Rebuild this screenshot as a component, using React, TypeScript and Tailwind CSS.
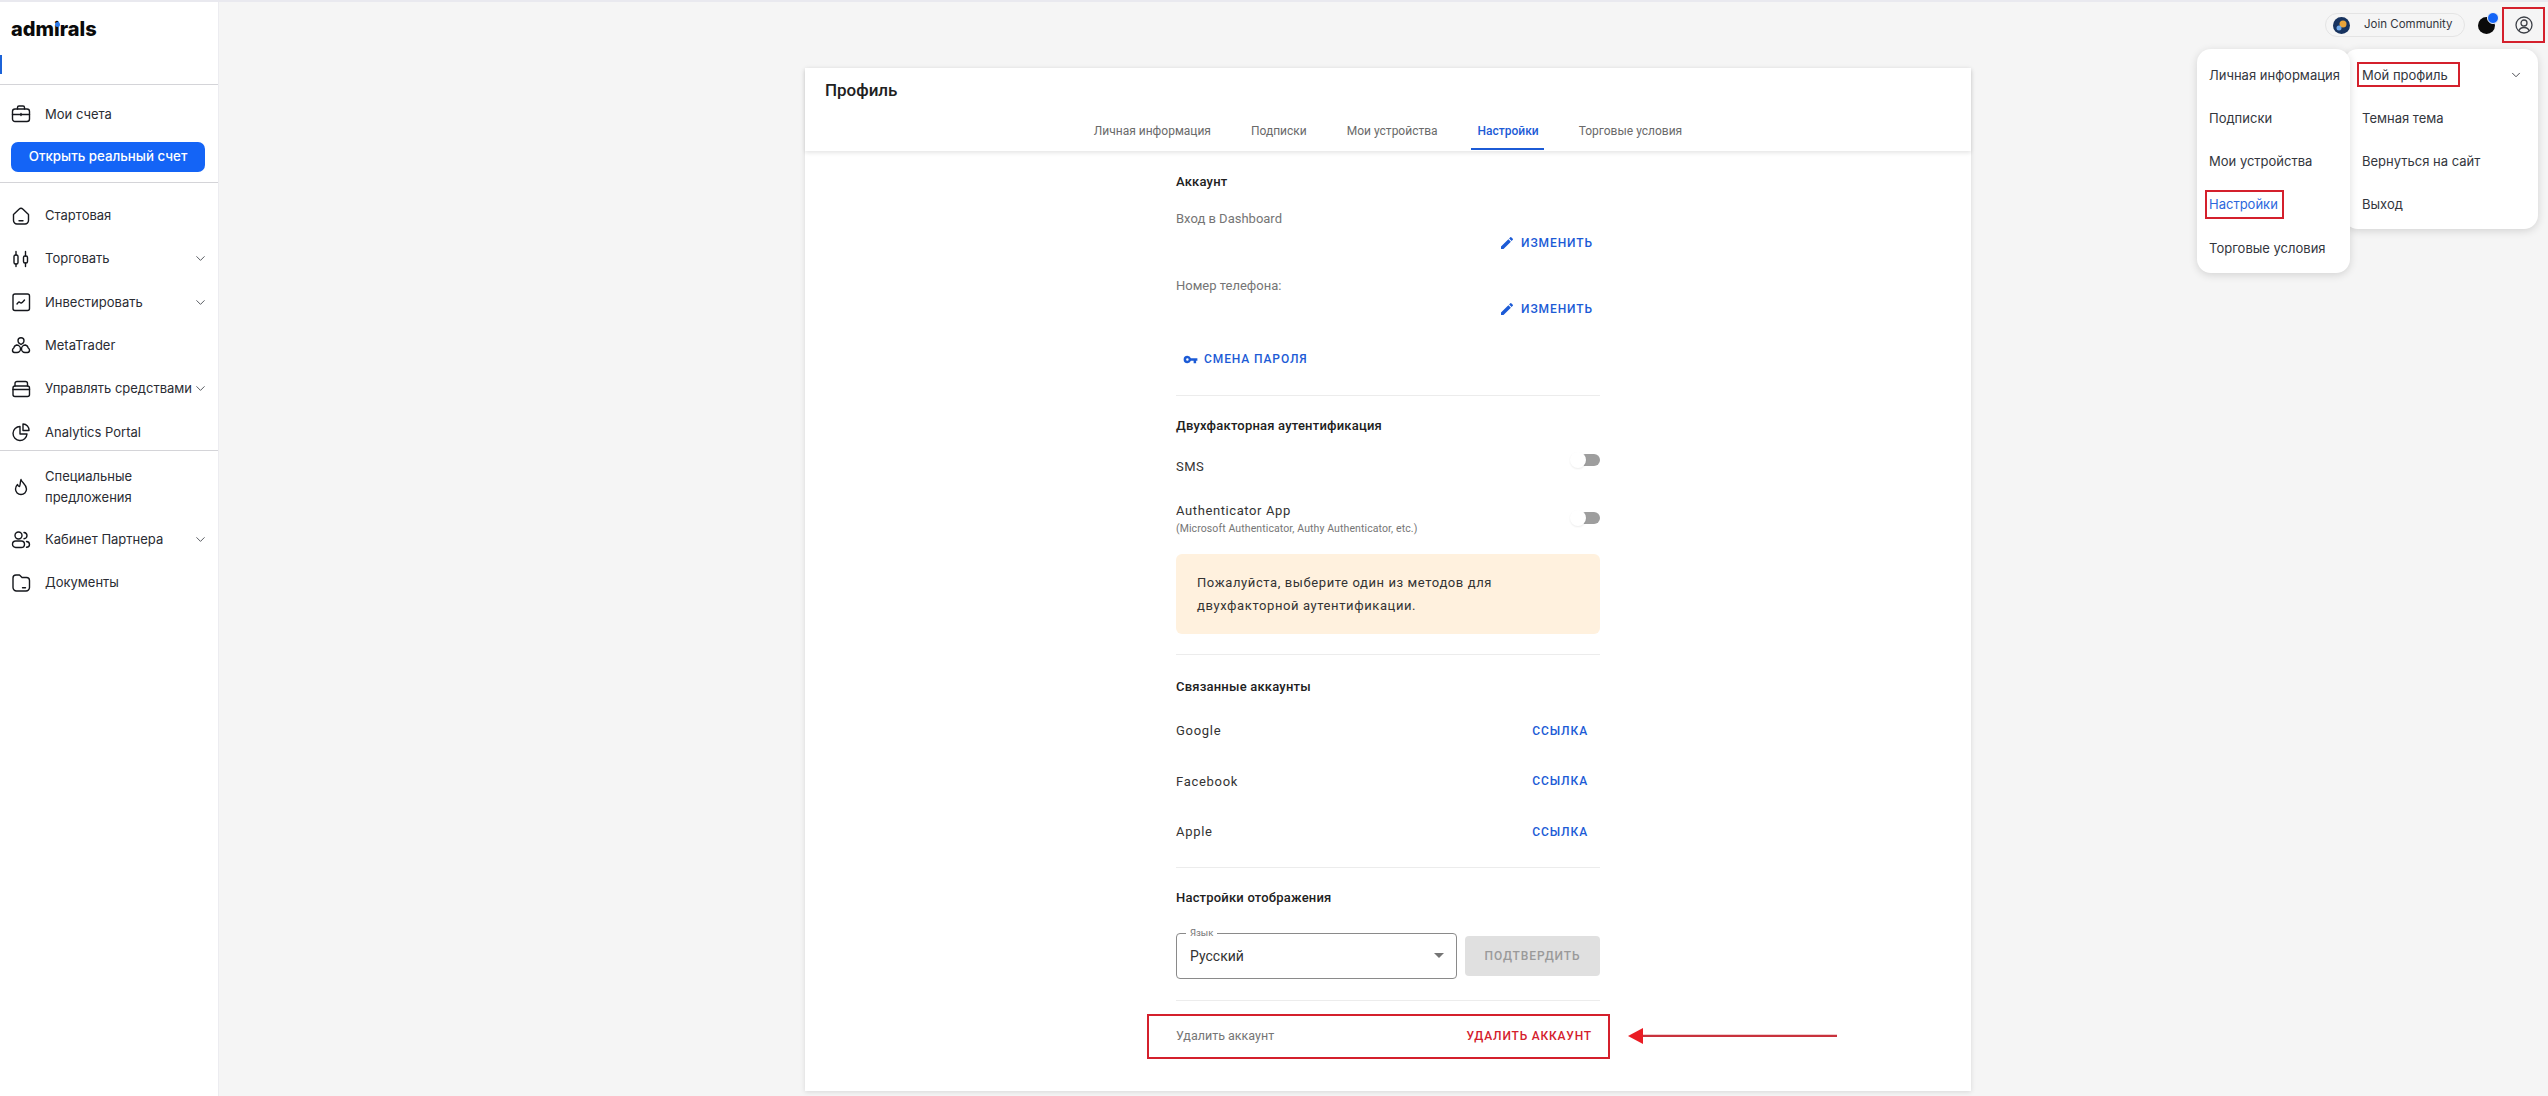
import { ReactNode } from "react"
import { ChevronDown } from "lucide-react"

const sw = { fill: "none", stroke: "currentColor", strokeWidth: 1.4, strokeLinecap: "round" as const, strokeLinejoin: "round" as const }

const Ic = ({ children }: { children: ReactNode }) => (
    <svg width="20" height="20" viewBox="0 0 20 20" className="shrink-0 text-[#15171c]" {...sw}>{children}</svg>
)

const icons: Record<string, ReactNode> = {
    accounts: <Ic><rect x="1.5" y="5" width="17" height="12.5" rx="2.5" /><path d="M6.5 5V3.5a1.5 1.5 0 0 1 1.5-1.5h4a1.5 1.5 0 0 1 1.5 1.5V5M1.5 10.5h17M10 9.5v2" /></Ic>,
    home: <Ic><path d="M2.5 8.5 8 3.2a3 3 0 0 1 4 0l5.500 5.300v6a3.500 3.500 0 0 1-3.500 3.500H6a3.500 3.500 0 0 1-3.500-3.500z" /><path d="M8 14.800h4" /></Ic>,
    trade: <Ic><rect x="3" y="6" width="4" height="9" rx="1.500" /><rect x="12.500" y="7" width="4" height="7" rx="1.500" /><path d="M5 2.500V6M5 15v2.500M14.500 2.500V7M14.500 14v3.500" /></Ic>,
    invest: <Ic><rect x="2" y="2" width="16.500" height="16.500" rx="2" /><path d="M6 12c1.500-2 2-2.500 3-1.500s1.500 1 4.500-2.500" /></Ic>,
    meta: <Ic><path d="M10 1.800a3 3 0 0 1 3 3c0 1-.5 1.800-1 2.400l-2 1.300-2-1.300c-.5-.6-1-1.400-1-2.400a3 3 0 0 1 3-3z" /><path d="M5.500 9a4 4 0 0 1 4 4 3.500 3.500 0 0 1-3.500 3.500H3.500A2.300 2.300 0 0 1 1.500 14c0-1 .7-1.600 1.200-2A4 4 0 0 1 5.500 9z" /><path d="M14.500 9a4 4 0 0 0-4 4 3.500 3.500 0 0 0 3.500 3.500h2.500a2.300 2.300 0 0 0 2-2.500c0-1-.7-1.600-1.200-2A4 4 0 0 0 14.500 9z" /></Ic>,
    funds: <Ic><rect x="2" y="7" width="16.500" height="10.500" rx="2" /><path d="M4 7V4.500A2 2 0 0 1 6 2.500h8.500a2 2 0 0 1 2 2V7M2 10.500h16.500" /></Ic>,
    pie: <Ic><path d="M9 4.500A7 7 0 1 0 16 12H9z" /><path d="M12 2a6 6 0 0 1 6 6.500h-6z" /></Ic>,
    flame: <Ic><path d="M10 2.500c.5 3 5.500 5 5.500 9.500a5.500 5.500 0 0 1-11 0c0-2 1-3.500 2-4.500.5 1.500 1.200 2 2 2C9.500 8 9 5 10 2.500z" /></Ic>,
    partner: <Ic><circle cx="7.500" cy="5.500" r="3.500" /><path d="M13 2.500a3.300 3.300 0 0 1 3 3.200 3.300 3.300 0 0 1-3 3" /><rect x="1.500" y="11" width="12" height="6.500" rx="3.250" /><path d="M15.500 11.500c2 .2 3 1.500 3 3s-1 2.600-3 2.800" /></Ic>,
    docs: <Ic><path d="M2 5a3 3 0 0 1 3-3h3.500L11 4.500h4.500a3 3 0 0 1 3 3v7a3.500 3.500 0 0 1-3.500 3.500H5.500A3.500 3.500 0 0 1 2 14.500z" /><path d="M11.500 14.800h3" /></Ic>,
}

const NavItem = ({ icon, label, arrow, className }: { icon: string, label: ReactNode, arrow?: boolean, className?: string }) => (
    <div className={`flex items-center pl-[11px] pr-[10px] text-[13px] text-[#2a2c33] ${className ?? "h-[43.300px]"}`}>
        <div className="w-[34px] shrink-0">{icons[icon]}</div>
        <div className="flex-1 leading-[21px] whitespace-nowrap">{label}</div>
        {arrow && <ChevronDown size={15} strokeWidth={1.300} className="shrink-0 text-[#33363d]" />}
    </div>
)

const Sidebar = () => (
    <aside className="w-[219px] shrink-0 bg-white border-r border-[#ececf0] font-['Inter',sans-serif] h-[1094px]">
        <div className="h-[82px] relative">
            <div className="pl-[11px] pt-[13px] text-[20px] font-extrabold leading-[29px] text-[#0a0a0a]">
                adm<span className="relative">i<span className="absolute left-[1px] top-[5px] w-[4.500px] h-[4.500px] rounded-full bg-[#2f7bea]" /></span>rals
            </div>
            <div className="absolute left-0 top-[53px] w-[2px] h-[19px] bg-[#1c63d8]" />
        </div>
        <div className="border-t border-[#d4d4d8] h-[98px] flex flex-col">
            <NavItem icon="accounts" label="Мои счета" className="h-[57px] pt-[1px]" />
            <button className="ml-[11px] mr-[13px] h-[30px] bg-[#1464f6] text-white rounded-[7px] text-[13.300px] font-medium">Открыть реальный счет</button>
        </div>
        <div className="border-t border-[#d4d4d8] pt-[11px] h-[268px]">
            <NavItem icon="home" label="Стартовая" />
            <NavItem icon="trade" label="Торговать" arrow />
            <NavItem icon="invest" label="Инвестировать" arrow />
            <NavItem icon="meta" label="MetaTrader" />
            <NavItem icon="funds" label="Управлять средствами" arrow />
            <NavItem icon="pie" label="Analytics Portal" />
        </div>
        <div className="border-t border-[#d4d4d8] pt-[2px]">
            <NavItem icon="flame" label={<>Специальные<br />предложения</>} className="h-[66px] pt-[1px]" />
            <NavItem icon="partner" label="Кабинет Партнера" arrow className="h-[43px] -mt-[1px]" />
            <NavItem icon="docs" label="Документы" className="h-[43px]" />
        </div>
    </aside>
)

const tabs = ["Личная информация", "Подписки", "Мои устройства", "Настройки", "Торговые условия"]

const Tabs = () => (
    <div className="flex justify-center gap-[40px] h-[40px]">
        {tabs.map(t => (
            <div key={t} className="relative h-full pt-[12px] text-[12px] leading-[16px] text-[#6a6a6a]">
                <span className={t === "Настройки" ? "text-[#1c5bd6] font-medium" : ""}>{t}</span>
                {t === "Настройки" && <div className="absolute -left-[7px] -right-[5px] bottom-[1px] h-[2px] bg-[#1c5bd6]" />}
            </div>
        ))}
    </div>
)

const Heading = ({ children, className }: { children: ReactNode, className?: string }) => (
    <div className={`text-[13px] font-medium leading-[16px] tracking-[0.2px] text-[#212121] ${className ?? ""}`}>{children}</div>
)

const Pencil = () => (
    <svg width="16" height="16" viewBox="0 0 24 24" fill="currentColor"><path d="M3 17.250V21h3.750L17.810 9.940l-3.750-3.750L3 17.250zM20.710 7.040a1 1 0 0 0 0-1.410l-2.340-2.340a1 1 0 0 0-1.410 0l-1.830 1.830 3.750 3.750 1.830-1.830z" /></svg>
)

const Key = () => (
    <svg width="15" height="15" viewBox="0 0 24 24" fill="currentColor"><path d="M12.650 10A6 6 0 0 0 7 6a6 6 0 0 0 0 12 6 6 0 0 0 5.650-4H17v4h4v-4h2v-4H12.650zM7 14a2 2 0 1 1 0-4 2 2 0 0 1 0 4z" /></svg>
)

const Change = () => (
    <div className="flex justify-end items-center gap-[6px] pr-[7px] text-[#1c5bd6] text-[12px] font-medium tracking-[0.9px] leading-[16px]">
        <Pencil /> ИЗМЕНИТЬ
    </div>
)

const Toggle = () => (
    <div className="relative w-[30px] h-[12px] shrink-0">
        <div className="absolute right-0 top-0 w-[26px] h-[12px] rounded-full bg-[#9e9e9e]" />
        <div className="absolute left-0 -top-[2px] w-[16px] h-[16px] rounded-full bg-white shadow-[0_1px_2px_rgba(0,0,0,0.08)]" />
    </div>
)

const Linked = ({ name }: { name: string }) => (
    <div className="flex items-center justify-between h-[50.300px] pr-[12px] tracking-[0.7px] text-[13px] text-[#333]">
        <span>{name}</span>
        <span className="text-[#1c5bd6] text-[12px] font-medium tracking-[0.9px]">ССЫЛКА</span>
    </div>
)

const Divider = ({ className }: { className?: string }) => <div className={`h-[1px] bg-[#ececec] ${className ?? ""}`} />

const Settings = () => (
    <div className="ml-[371px] w-[424px] text-[13px] pb-[32px]">
        <Heading className="pt-[23px]">Аккаунт</Heading>
        <div className="mt-[21px] text-[#757575] leading-[16px]">Вход в Dashboard</div>
        <div className="mt-[8px]"><Change /></div>
        <div className="mt-[27px] text-[#757575] leading-[16px]">Номер телефона:</div>
        <div className="mt-[7px]"><Change /></div>
        <div className="mt-[34px] ml-[7px] flex items-center gap-[6px] text-[#1c5bd6] font-medium tracking-[0.9px] leading-[16px] text-[12px]"><Key /> СМЕНА ПАРОЛЯ</div>
        <Divider className="mt-[28px]" />
        <Heading className="mt-[22px]">Двухфакторная аутентификация</Heading>
        <div className="mt-[25px] flex justify-between h-[16px] tracking-[0.5px] text-[#333]">
            <span className="leading-[16px]">SMS</span>
            <div className="-mt-[5px]"><Toggle /></div>
        </div>
        <div className="mt-[28px] flex justify-between h-[34px]">
            <div>
                <div className="leading-[16px] tracking-[0.6px] text-[#333]">Authenticator App</div>
                <div className="mt-[3px] text-[10.500px] leading-[13px] tracking-[0.1px] text-[#757575]">(Microsoft Authenticator, Authy Authenticator, etc.)</div>
            </div>
            <div className="mt-[9px]"><Toggle /></div>
        </div>
        <div className="mt-[17px] h-[80px] rounded-[6px] bg-[#fff1de] px-[21px] py-[17px] leading-[23px] tracking-[0.6px] text-[#333]">
            Пожалуйста, выберите один из методов для<br />двухфакторной аутентификации.
        </div>
        <Divider className="mt-[20px]" />
        <Heading className="mt-[24px] mb-[11px]">Связанные аккаунты</Heading>
        <Linked name="Google" />
        <Linked name="Facebook" />
        <Linked name="Apple" />
        <Divider className="mt-[10px]" />
        <Heading className="mt-[22px]">Настройки отображения</Heading>
        <div className="mt-[27px] flex items-center gap-[8px]">
            <div className="relative w-[281px] h-[46px] rounded-[4px] border border-[#8a8a8a] flex items-center justify-between pl-[13px] pr-[12px] text-[14px] text-[#333]">
                <span className="absolute left-[9px] -top-[7px] bg-white px-[4px] text-[9.500px] leading-[12px] text-[#757575]">Язык</span>
                <span className="pt-[1px]">Русский</span>
                <div className="w-0 h-0 border-x-[5px] border-x-transparent border-t-[5px] border-t-[#757575]" />
            </div>
            <div className="w-[135px] h-[40px] bg-[#e0e0e0] rounded-[4px] flex items-center justify-center text-[12px] text-[#9a9a9a] font-medium tracking-[0.9px]">ПОДТВЕРДИТЬ</div>
        </div>
        <Divider className="mt-[21px]" />
        <div className="relative -ml-[29px] -mr-[10px] mt-[13px] h-[45px] border-2 border-[#d4202c] flex items-center justify-between pl-[27px] pr-[16px]">
            <span className="text-[#757575] text-[12.500px] leading-[16px]">Удалить аккаунт</span>
            <span className="text-[#d4202c] text-[12px] font-medium tracking-[0.8px]">УДАЛИТЬ АККАУНТ</span>
            <svg className="absolute left-[479px] top-[10px]" width="210" height="20" viewBox="0 0 210 20">
                <path d="M15 8.700H209v2.200H15z" fill="#c8323c" />
                <path d="M0 10 15 2v16z" fill="#ea1c24" />
            </svg>
        </div>
    </div>
)

const Community = () => (
    <div className="flex items-center h-[24px] w-[140px] rounded-full border border-[#e4e4e4] pl-[7px] text-[11.500px] text-[#33363d] font-['Inter',sans-serif]">
        <svg width="17" height="17" viewBox="0 0 17 17" className="shrink-0">
            <circle cx="8.500" cy="8.500" r="8.500" fill="#17335f" />
            <circle cx="10" cy="7" r="3.500" fill="#e8a33a" />
            <circle cx="6" cy="11" r="2.500" fill="#6fa8e8" />
        </svg>
        <span className="ml-[14px]">Join Community</span>
    </div>
)

const Menus = () => (
    <div className="absolute right-[10px] top-[47px] text-[13px] text-[#33363d] font-['Inter',sans-serif] leading-[20px]">
        <div className="absolute right-0 top-0 w-[194px] h-[180px] bg-white rounded-[14px] shadow-[0_2px_8px_rgba(0,0,0,0.14)] pl-[18px] pr-[15px] pt-[16px]">
            <div className="flex items-center justify-between h-[20px]">
                <span className="relative">
                    Мой профиль
                    <span className="absolute -left-[5px] -right-[12px] -top-[3px] -bottom-[2px] border-2 border-[#d4202c]" />
                </span>
                <ChevronDown size={14} strokeWidth={1.500} />
            </div>
            <div className="mt-[23px]">Темная тема</div>
            <div className="mt-[23px]">Вернуться на сайт</div>
            <div className="mt-[23px]">Выход</div>
        </div>
        <div className="relative mr-[188px] w-[153px] h-[224px] bg-white rounded-[14px] shadow-[0_2px_8px_rgba(0,0,0,0.14)] pl-[12px] pt-[16px]">
            <div>Личная информация</div>
            <div className="mt-[23px]">Подписки</div>
            <div className="mt-[23px]">Мои устройства</div>
            <div className="mt-[23px] relative w-fit text-[#2c67dc]">
                Настройки
                <span className="absolute -left-[4px] -right-[6px] -top-[4px] -bottom-[5px] border-2 border-[#d4202c]" />
            </div>
            <div className="mt-[24px]">Торговые условия</div>
        </div>
    </div>
)

const Topbar = () => (
    <div className="absolute right-[3px] top-[5px] flex items-center h-[36px]">
        <Community />
        <div className="relative w-[17px] h-[17px] rounded-full bg-[#0a0a0a] ml-[13px] mr-[7px]">
            <div className="absolute -top-[5px] -right-[4px] w-[12px] h-[12px] rounded-full bg-[#1464f6] border-[1.500px] border-[#f5f5f5]" />
        </div>
        <div className="w-[43px] h-[36px] border-2 border-[#d4202c] flex items-center justify-center">
            <svg width="18" height="18" viewBox="0 0 18 18" fill="none" stroke="#3d4047" strokeWidth="1.300">
                <circle cx="9" cy="9" r="8" />
                <circle cx="9" cy="7" r="3" />
                <path d="M3.800 15c.7-2.300 2.700-3.500 5.200-3.500s4.500 1.200 5.200 3.500" />
            </svg>
        </div>
    </div>
)

export default function App() {
    return (
        <div className="min-h-[1096px] bg-[#f5f5f5] border-t-2 border-[#e9e9ef] flex font-['Roboto',sans-serif] relative overflow-hidden">
            <Sidebar />
            <main className="flex-1 pt-[66px]">
                <div className="ml-[586px] w-[1166px] bg-white shadow-[0_1px_5px_rgba(0,0,0,0.12)]">
                    <div className="h-[83px] shadow-[0_2px_4px_rgba(0,0,0,0.1)] relative">
                        <div className="pl-[20px] pt-[10px] pb-[9px] h-[43px] text-[17px] leading-[24px] font-medium text-[#212121]">Профиль</div>
                        <Tabs />
                    </div>
                    <Settings />
                </div>
            </main>
            <Topbar />
            <Menus />
        </div>
    )
}
